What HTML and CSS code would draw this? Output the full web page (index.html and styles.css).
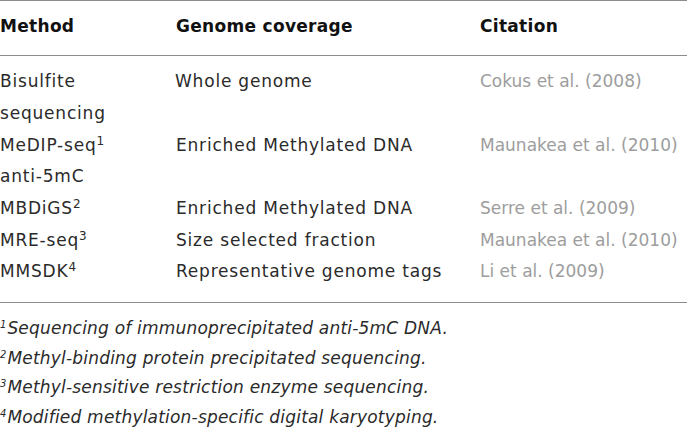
FILE: index.html
```html
<!DOCTYPE html>
<html>
<head>
<meta charset="utf-8">
<link rel="stylesheet" href="styles.css">
</head>
<body>
<div class="table">
  <div class="head">
    <div class="cell">Method</div>
    <div class="cell">Genome coverage</div>
    <div class="cell">Citation</div>
  </div>
  <div class="body">
    <div class="row">
      <div class="cell">Bisulfite<br>sequencing</div>
      <div class="cell cov-w">Whole genome</div>
      <div class="cell cite">Cokus et al. (2008)</div>
    </div>
    <div class="row">
      <div class="cell">MeDIP-seq<sup>1</sup><br>anti-5mC</div>
      <div class="cell">Enriched Methylated DNA</div>
      <div class="cell cite">Maunakea et al. (2010)</div>
    </div>
    <div class="row">
      <div class="cell">MBDiGS<sup>2</sup></div>
      <div class="cell">Enriched Methylated DNA</div>
      <div class="cell cite">Serre et al. (2009)</div>
    </div>
    <div class="row">
      <div class="cell">MRE-seq<sup>3</sup></div>
      <div class="cell">Size selected fraction</div>
      <div class="cell cite">Maunakea et al. (2010)</div>
    </div>
    <div class="row">
      <div class="cell">MMSDK<sup>4</sup></div>
      <div class="cell">Representative genome tags</div>
      <div class="cell cite">Li et al. (2009)</div>
    </div>
  </div>
  <div class="notes">
    <p><sup>1</sup>Sequencing of immunoprecipitated anti-5mC DNA.</p>
    <p><sup>2</sup>Methyl-binding protein precipitated sequencing.</p>
    <p><sup>3</sup>Methyl-sensitive restriction enzyme sequencing.</p>
    <p><sup>4</sup>Modified methylation-specific digital karyotyping.</p>
  </div>
</div>
</body>
</html>
```

FILE: styles.css
```css
html, body {
  margin: 0;
  padding: 0;
  background: #ffffff;
}
body {
  font-family: "DejaVu Sans", "Liberation Sans", sans-serif;
  font-size: 17px;
  color: #2a2a2a;
  width: 687px;
  height: 431px;
  overflow: hidden;
}
.table {
  display: flex;
  flex-direction: column;
}
.head, .row {
  display: grid;
  grid-template-columns: 176px 304px 1fr;
}
.head {
  border-top: 1px solid #8c8c8c;
  border-bottom: 1px solid #8c8c8c;
  padding: 10px 0 12px;
  line-height: 31.67px;
  font-weight: bold;
  color: #111;
}
.head .cell {
  letter-spacing: 0.3px;
}
.body {
  padding: 10.6px 0 13.7px;
  line-height: 31.67px;
  border-bottom: 1px solid #8c8c8c;
}
.cell {
  white-space: nowrap;
  letter-spacing: 0.8px;
}
.cov-w {
  margin-left: -1px;
}
.body .cite {
  color: #9d9d9d;
  letter-spacing: 0;
}
sup {
  font-size: 12px;
  line-height: 0;
  vertical-align: 6px;
  letter-spacing: 0;
}
.notes {
  padding-top: 11.5px;
  font-style: italic;
  line-height: 29.5px;
  letter-spacing: 0.2px;
}
.notes p {
  margin: 0;
}
.notes sup {
  font-size: 10px;
  vertical-align: 6px;
  margin-right: 1px;
}
```
